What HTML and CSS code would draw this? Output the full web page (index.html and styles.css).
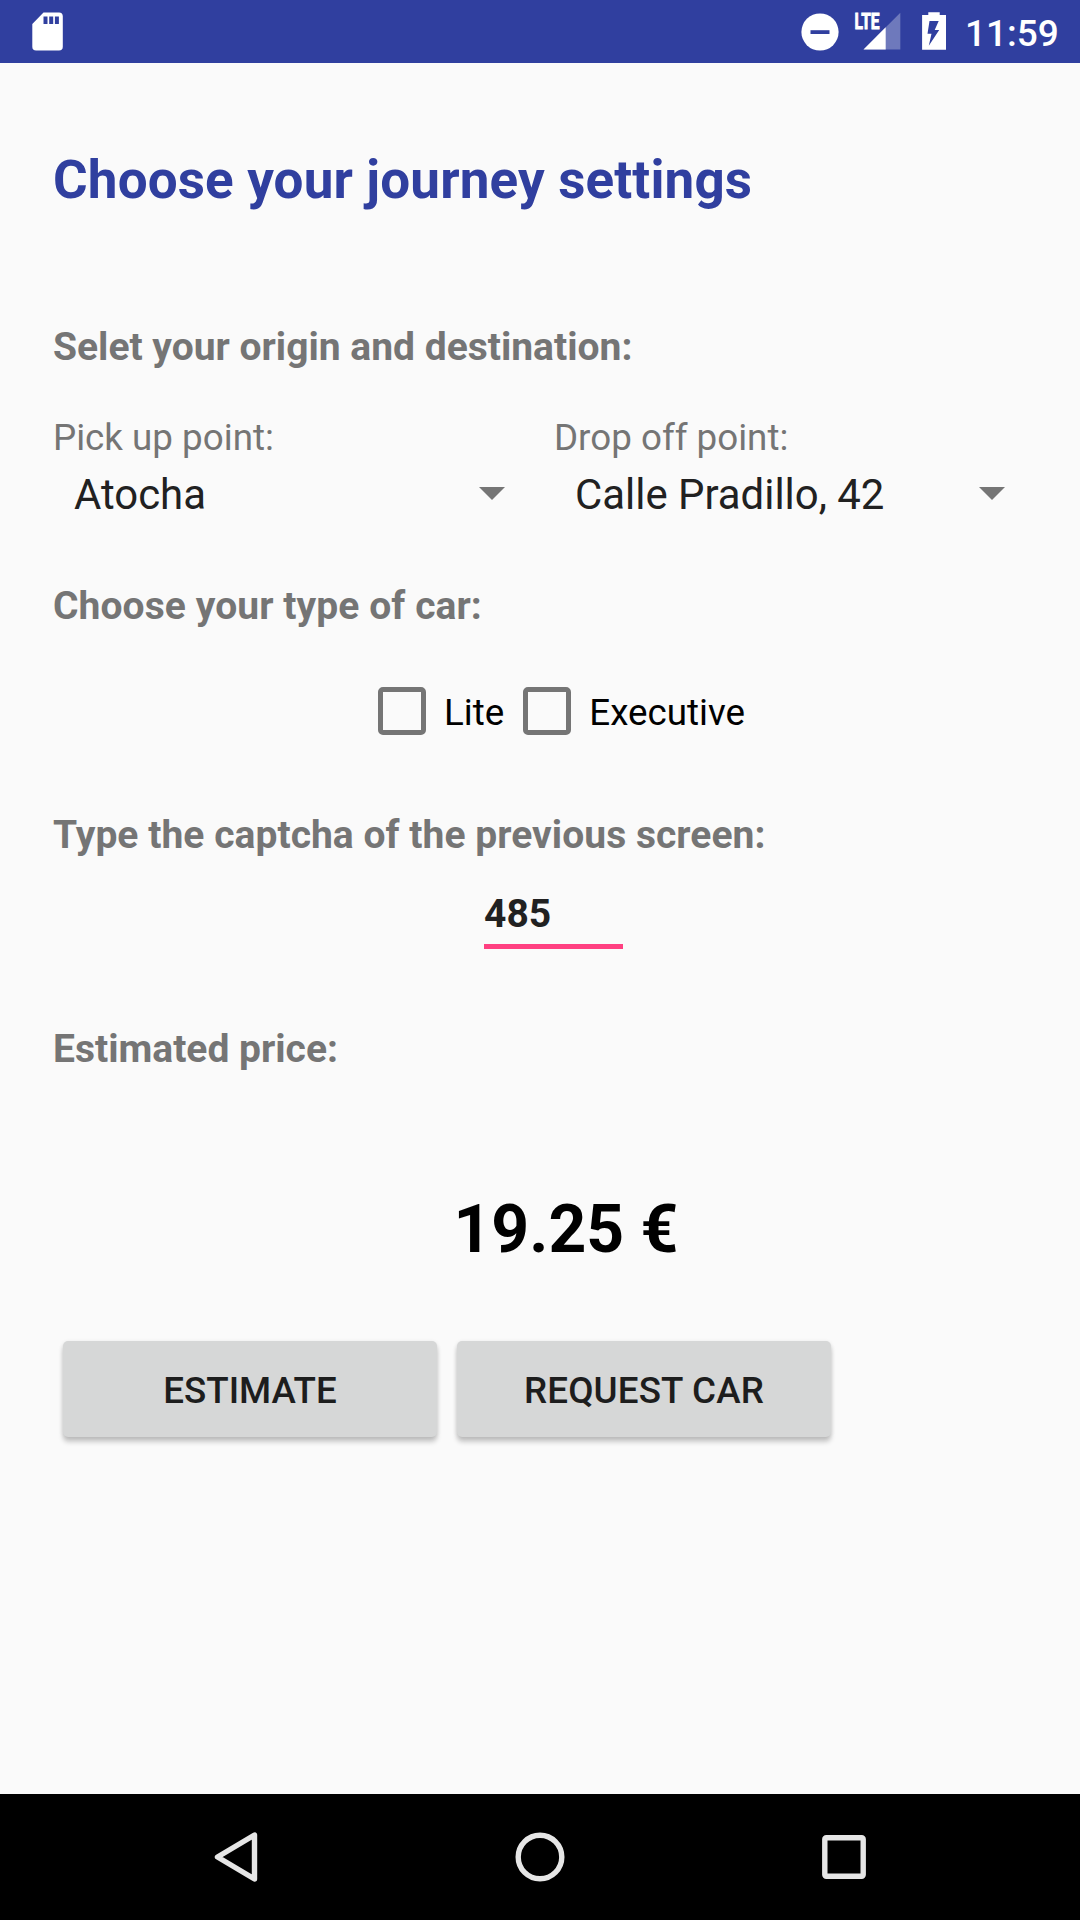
FILE: index.html
```html
<!DOCTYPE html>
<html lang="en">
<head>
<meta charset="utf-8">
<title>Journey settings</title>
<link rel="stylesheet" href="styles.css">
</head>
<body>
<div class="screen">
  <header class="status">
    <svg class="sd" width="32" height="63" viewBox="32 0 32 63"><path fill="#fff" fill-rule="evenodd" d="M43.5 12.5H59a3.8 3.8 0 0 1 3.8 3.8V46.700a3.800 3.800 0 0 1-3.800 3.800H36.100a3.800 3.800 0 0 1-3.800-3.800V24zM43.500 16.500V24h4V16.500zM49.200 16.500V24h4V16.500zM54.900 16.500V24h4V16.500z"/></svg>
    <svg class="dnd" width="38" height="63" viewBox="801 0 38 63"><circle cx="820" cy="32" r="18.600" fill="#fff"/><path fill="#303f9f" d="M810.500 30.200h19v3.800h-19z"/></svg>
    <svg class="signal" width="48" height="63" viewBox="853 0 48 63"><path fill="#fff" fill-opacity=".3" d="M900.300 12.700V49.500H863.500z"/><path fill="#fff" d="M885.700 27.300V49.500H863.500z"/><text class="lte" x="854.500" y="29" textLength="25" lengthAdjust="spacingAndGlyphs">LTE</text></svg>
    <svg class="battery" width="26" height="63" viewBox="921 0 26 63"><path fill="#fff" d="M928.300 15v-2.700h11.400V15h6.300v34.700h-23.900V15z"/><path fill="#303f9f" d="M929.500 21h9.200l-4 9h4.500l-10.400 15.700 2.700-12h-4z"/></svg>
    <span class="clock">11:59</span>
  </header>

  <main class="content">
    <h1 class="title">Choose your journey settings</h1>

    <h2 class="section route-heading">Selet your origin and destination:</h2>
    <div class="route">
      <div class="field">
        <div class="label">Pick up point:</div>
        <div class="spinner"><span>Atocha</span><svg class="caret" width="26" height="13" viewBox="0 0 26 13"><path d="M0 0h26L13 13z"/></svg></div>
      </div>
      <div class="field">
        <div class="label">Drop off point:</div>
        <div class="spinner"><span>Calle Pradillo, 42</span><svg class="caret" width="26" height="13" viewBox="0 0 26 13"><path d="M0 0h26L13 13z"/></svg></div>
      </div>
    </div>

    <h2 class="section car-heading">Choose your type of car:</h2>
    <div class="cars">
      <label class="check"><span class="box"></span><span class="check-text">Lite</span></label>
      <label class="check"><span class="box"></span><span class="check-text">Executive</span></label>
    </div>

    <h2 class="section captcha-heading">Type the captcha of the previous screen:</h2>
    <div class="captcha">485</div>

    <h2 class="section price-heading">Estimated price:</h2>
    <div class="price">19.25 €</div>

    <div class="actions">
      <button class="btn">ESTIMATE</button>
      <button class="btn request">REQUEST CAR</button>
    </div>
  </main>

  <nav class="navbar">
    <svg width="50" height="54" viewBox="0 0 50 54"><path d="M41.500 5v44L4.500 27z"/></svg>
    <svg width="54" height="54" viewBox="0 0 54 54"><circle cx="27" cy="27" r="21.800"/></svg>
    <svg width="54" height="54" viewBox="0 0 54 54"><rect x="7.800" y="7.800" width="38.400" height="38.400" rx="1.500"/></svg>
  </nav>
</div>
</body>
</html>
```
FILE: styles.css
```css
* { box-sizing: border-box; }

body {
  margin: 0;
  background: #fafafa;
  font-family: Roboto, sans-serif;
}

.screen {
  display: flex;
  flex-direction: column;
  width: 1080px;
  height: 1920px;
}

.status {
  display: flex;
  flex: none;
  height: 63px;
  padding-left: 32px;
  background: #303f9f;
}

.dnd { margin-left: 737px; }
.signal { margin-left: 14px; }
.battery { margin-left: 20px; }

.lte {
  fill: #fff;
  stroke: #fff;
  stroke-width: .9px;
  font-size: 22px;
  font-weight: 700;
}

.clock {
  margin-left: 18px;
  color: #fff;
  font-size: 37px;
  font-weight: 500;
  line-height: 67px;
}

.content {
  display: flex;
  flex: 1;
  flex-direction: column;
  padding: 86px 0 0 53px;
}

.title {
  margin: 0;
  color: #303f9f;
  font-size: 53px;
  font-weight: 700;
  letter-spacing: .14px;
  line-height: 62px;
}

.section {
  margin: 0;
  color: #757575;
  font-size: 39px;
  font-weight: 700;
  line-height: 46px;
}

.route-heading { margin-top: 113px; }
.car-heading { margin-top: 63px; letter-spacing: .08px; }
.captcha-heading { margin-top: 59px; letter-spacing: .04px; }
.price-heading { margin-top: 77px; }

.route {
  display: grid;
  grid-template-columns: 501px 500px;
  margin-top: 46px;
}

.label {
  color: #757575;
  font-size: 36.75px;
  line-height: 43px;
}

.spinner {
  display: flex;
  justify-content: space-between;
  align-items: flex-start;
  margin-top: 11px;
  padding: 0 49.5px 0 21px;
  color: #212121;
  font-size: 41.9px;
  line-height: 50px;
}

.caret {
  margin-top: 17px;
  fill: #757575;
}

.cars {
  display: flex;
  margin: 40px 0 0 307px;
}

.check {
  display: flex;
  align-items: center;
  height: 84px;
  margin-right: 1px;
  padding-left: 18px;
  color: #000;
  font-size: 36.75px;
}

.box {
  width: 48px;
  height: 48px;
  margin-right: 18px;
  border: 5px solid #757575;
  border-radius: 5px;
}

.check-text { padding-top: 2px; }

.captcha {
  width: 139px;
  margin: 33px 0 0 431px;
  padding-bottom: 7px;
  border-bottom: 5px solid #ff4081;
  color: #212121;
  font-size: 39px;
  font-weight: 700;
  line-height: 46px;
}

.price {
  margin: 119px 0 0 400.5px;
  color: #000;
  font-size: 66px;
  font-weight: 700;
  line-height: 77px;
}

.actions {
  display: flex;
  gap: 20px;
  margin: 73px 0 0 10px;
}

.btn {
  width: 374px;
  height: 96px;
  padding: 2px 0 0;
  border: 0;
  border-radius: 5px;
  background: #d6d7d7;
  box-shadow: 0 5px 5px rgba(0, 0, 0, .2), 0 1px 4px rgba(0, 0, 0, .1);
  color: #1d1d1d;
  font-family: inherit;
  font-size: 36.75px;
  font-weight: 500;
}

.request { letter-spacing: .15px; }

.navbar {
  display: flex;
  flex: none;
  align-items: center;
  justify-content: space-between;
  height: 126px;
  padding: 0 209px 0 213px;
  background: #000;
}

.navbar svg {
  fill: none;
  stroke: #e6e6e6;
  stroke-width: 5.4;
  stroke-linejoin: round;
}
```
